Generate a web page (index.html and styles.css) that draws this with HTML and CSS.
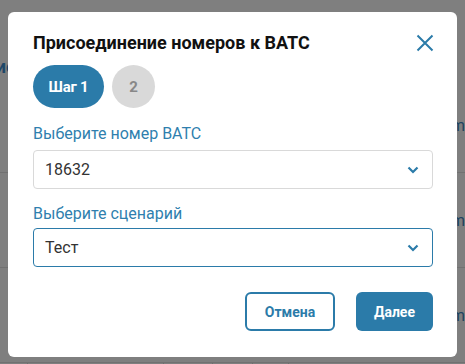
FILE: index.html
```html
<!DOCTYPE html>
<html lang="ru">
<head>
  <meta charset="UTF-8" />
  <title>Присоединение номеров к ВАТС</title>
  <link rel="stylesheet" href="styles.css">
</head>
<body>
  <div class="page">
    <div class="page-head"><span class="page-title">Присоединение</span></div>
    <div class="table">
      <div class="row tall"><div class="cell c1"></div><div class="cell c2"></div><div class="cell c3"></div><div class="cell c4"></div><div class="cell c5"></div><div class="cell c6"><span class="mail far">@gmail.com</span></div></div>
      <div class="row tall"><div class="cell c1"></div><div class="cell c2"></div><div class="cell c3"></div><div class="cell c4"></div><div class="cell c5"></div><div class="cell c6"><span class="mail far">@gmail.com</span></div></div>
      <div class="row tall"><div class="cell c1"></div><div class="cell c2"></div><div class="cell c3"></div><div class="cell c4"></div><div class="cell c5"></div><div class="cell c6"><span class="mail far">@gmail.com</span></div></div>
      <div class="row"><div class="cell c1"></div><div class="cell c2">+7 (031) 111 08 26</div><div class="cell c3">1</div><div class="cell c4"><span class="dot"></span></div><div class="cell c5"><span class="dot"></span></div><div class="cell c6"><span class="mail">parkindb1@gmail.com</span></div></div>
    </div>
  </div>

  <div class="overlay">
    <div class="dialog">
      <div class="dialog-head">
        <h2 class="dialog-title">Присоединение номеров к ВАТС</h2>
        <button class="close" aria-label="Закрыть">
          <svg width="18" height="18" viewBox="0 0 18 18"><path d="M1.5 1.5L16.5 16.5M16.5 1.5L1.5 16.5" stroke="#2b7ba9" stroke-width="2" fill="none"/></svg>
        </button>
      </div>

      <div class="steps">
        <span class="step active">Шаг 1</span>
        <span class="step round">2</span>
      </div>

      <div class="field">
        <label class="field-label">Выберите номер ВАТС</label>
        <div class="select">
          <span>18632</span>
          <svg width="12" height="8" viewBox="0 0 12 8"><path d="M1.5 1.5L6 6L10.5 1.5" stroke="#2b7ba9" stroke-width="2.2" fill="none"/></svg>
        </div>
      </div>

      <div class="field second">
        <label class="field-label">Выберите сценарий</label>
        <div class="select focused">
          <span>Тест</span>
          <svg width="12" height="8" viewBox="0 0 12 8"><path d="M1.5 1.5L6 6L10.5 1.5" stroke="#2b7ba9" stroke-width="2.2" fill="none"/></svg>
        </div>
      </div>

      <div class="actions">
        <button class="btn outline">Отмена</button>
        <button class="btn primary">Далее</button>
      </div>
    </div>
  </div>
</body>
</html>
```

FILE: styles.css
```css
html, body { overflow: hidden; }
body { margin: 0; font-family: Roboto, "Liberation Sans", sans-serif; background: #fff; height: 364px; }

.page { width: 465px; height: 364px; overflow: hidden; }
.page-head { height: 78px; display: flex; align-items: flex-end; }
.page-title { margin-left: -118px; font-size: 18px; line-height: 22px; font-weight: 700; color: #3d8fd0; }
.row { display: flex; height: 94px; border-bottom: 1px solid #e3e3e3; }
.row:last-child { height: 40px; }
.cell { border-right: 1px solid #ddd; display: flex; align-items: center; justify-content: center; font-size: 16px; color: #333; white-space: nowrap; box-sizing: border-box; }
.row.tall .cell { border-right-color: transparent; }
.c1 { width: 40px; }
.c2 { width: 151px; }
.c3 { width: 71px; }
.c4 { width: 57px; }
.c5 { width: 53px; }
.c6 { flex: 1; justify-content: flex-start; padding-left: 15px; border-right: none; }
.mail { color: #3f86c0; }
.mail.far { padding-left: 68px; }
.dot { width: 10px; height: 10px; border-radius: 50%; background: #999; }

.overlay { position: fixed; inset: 0; background: rgba(0, 0, 0, 0.5); display: flex; justify-content: center; align-items: flex-start; padding-top: 12px; }
.dialog { width: 449px; box-sizing: border-box; background: #fff; border-radius: 6px; padding: 19px 24px 26px 25px; }

.dialog-head { display: flex; justify-content: space-between; align-items: center; height: 24px; }
.dialog-title { margin: 0; font-size: 18px; line-height: 24px; font-weight: 700; color: #111; }
.close { background: none; border: none; padding: 0; margin-right: -1px; width: 18px; height: 18px; cursor: pointer; display: flex; }

.steps { display: flex; gap: 8px; margin-top: 10px; }
.step { height: 43px; display: flex; align-items: center; justify-content: center; font-size: 15px; font-weight: 700; border-radius: 22px; }
.step.active { width: 71px; background: #2b7ba9; color: #fff; letter-spacing: -0.2px; }
.step.round { width: 43px; background: #d9d9d9; color: #888; }

.field { margin-top: 16px; }
.field.second { margin-top: 15px; }
.field-label { display: block; font-size: 16px; line-height: 20px; color: #2f7fae; margin-bottom: 6px; }
.field.second .field-label { margin-bottom: 4px; }
.select { height: 39px; box-sizing: border-box; border: 1px solid #d9d9d9; border-radius: 4px; padding: 0 13px 0 11px; display: flex; align-items: center; justify-content: space-between; font-size: 16px; color: #333; }
.select.focused { border-color: #2b7ba9; }

.actions { display: flex; justify-content: flex-end; gap: 21px; margin-top: 25px; }
.btn { height: 39px; border-radius: 6px; font-family: inherit; font-size: 14px; font-weight: 700; cursor: pointer; box-sizing: border-box; }
.btn.outline { width: 90px; background: #fff; border: 2px solid #2b7ba9; color: #2b7ba9; }
.btn.primary { width: 77px; background: #2b7ba9; border: none; color: #fff; }
```
